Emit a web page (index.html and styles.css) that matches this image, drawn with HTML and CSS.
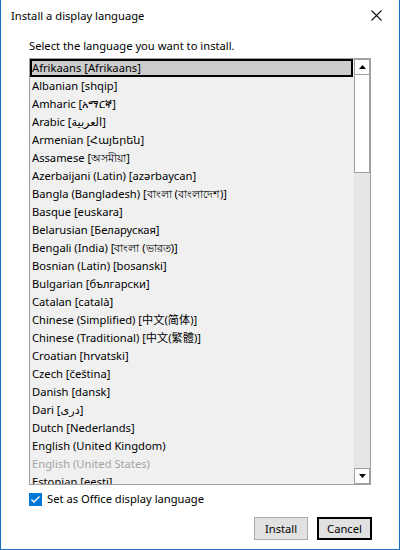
FILE: index.html
```html
<!DOCTYPE html>
<html lang="en">
<head>
<meta charset="utf-8">
<title>Install a display language</title>
<link rel="stylesheet" href="styles.css">
</head>
<body>
<div class="window">
  <div class="titlebar">
    <span class="title">Install a display language</span>
    <span class="close" aria-label="Close">
      <svg width="11" height="11" viewBox="0 0 11 11"><path d="M0.5 0.5 L10.5 10.5 M10.5 0.5 L0.5 10.5" stroke="#111" stroke-width="1.1" fill="none"/></svg>
    </span>
  </div>
  <div class="content">
    <div class="prompt">Select the language you want to install.</div>
    <div class="listbox">
      <ul class="items">
        <li class="item selected">Afrikaans [Afrikaans]</li>
        <li class="item">Albanian [shqip]</li>
        <li class="item">Amharic [አማርኛ]</li>
        <li class="item">Arabic [العربية]</li>
        <li class="item">Armenian [Հայերեն]</li>
        <li class="item">Assamese [অসমীয়া]</li>
        <li class="item">Azerbaijani (Latin) [azərbaycan]</li>
        <li class="item">Bangla (Bangladesh) [বাংলা (বাংলাদেশ)]</li>
        <li class="item">Basque [euskara]</li>
        <li class="item">Belarusian [Беларуская]</li>
        <li class="item">Bengali (India) [বাংলা (ভারত)]</li>
        <li class="item">Bosnian (Latin) [bosanski]</li>
        <li class="item">Bulgarian [български]</li>
        <li class="item">Catalan [català]</li>
        <li class="item">Chinese (Simplified) [中文(简体)]</li>
        <li class="item">Chinese (Traditional) [中文(繁體)]</li>
        <li class="item">Croatian [hrvatski]</li>
        <li class="item">Czech [čeština]</li>
        <li class="item">Danish [dansk]</li>
        <li class="item">Dari [دری]</li>
        <li class="item">Dutch [Nederlands]</li>
        <li class="item">English (United Kingdom)</li>
        <li class="item disabled">English (United States)</li>
        <li class="item">Estonian [eesti]</li>
      </ul>
      <div class="scrollbar">
        <div class="sb-btn">
          <svg width="7" height="4" viewBox="0 0 7 4"><path d="M0 4 L3.5 0 L7 4 Z" fill="#000"/></svg>
        </div>
        <div class="sb-thumb"></div>
        <div class="sb-track"></div>
        <div class="sb-btn">
          <svg width="7" height="4" viewBox="0 0 7 4"><path d="M0 0 L7 0 L3.5 4 Z" fill="#000"/></svg>
        </div>
      </div>
    </div>
    <label class="check-row">
      <span class="checkbox">
        <svg width="13" height="13" viewBox="0 0 13 13"><path d="M2.5 6.5 L5 9 L10.5 3.5" stroke="#fff" stroke-width="1.4" fill="none"/></svg>
      </span>
      <span class="check-label">Set as Office display language</span>
    </label>
    <div class="buttons">
      <button class="btn install">Install</button>
      <button class="btn cancel">Cancel</button>
    </div>
  </div>
</div>
</body>
</html>
```

FILE: styles.css
```css
html, body {
  margin: 0;
  padding: 0;
  background: #ffffff;
}

.window {
  width: 400px;
  height: 550px;
  box-sizing: border-box;
  border-left: 1px solid #1c6ebf;
  border-right: 1px solid #1c6ebf;
  border-bottom: 1px solid #1c6ebf;
  background: #ffffff;
  font-family: "Segoe UI", "Noto Sans", "DejaVu Sans", "Noto Sans CJK SC", sans-serif;
  font-size: 11.2px;
  color: #000;
  display: flex;
  flex-direction: column;
}

.titlebar {
  height: 31px;
  display: flex;
  align-items: center;
  justify-content: space-between;
  padding-left: 10px;
  padding-right: 17px;
}

.title {
  line-height: 16px;
}

.close {
  display: flex;
  width: 11px;
  height: 11px;
}

.content {
  padding: 0 28px;
  display: flex;
  flex-direction: column;
}

.prompt {
  margin-top: 7px;
  line-height: 16px;
  height: 16px;
}

.listbox {
  margin-top: 4px;
  height: 427px;
  box-sizing: border-box;
  border: 1px solid #a0a0a0;
  background: #f0f0f0;
  display: flex;
  overflow: hidden;
}

.items {
  list-style: none;
  margin: 0;
  padding: 0;
  width: 323px;
  flex: none;
}

.item {
  height: 18px;
  line-height: 18px;
  padding-left: 2px;
  white-space: nowrap;
  overflow: hidden;
  box-sizing: border-box;
}

.item.selected {
  background: #cccccc;
  border: 2px solid #000;
  padding-left: 0;
  line-height: 14px;
}

.item.disabled {
  color: #a3a3a3;
}

.scrollbar {
  margin-left: 1px;
  width: 16px;
  flex: none;
  background: #e6e6e6;
  display: flex;
  flex-direction: column;
}

.sb-btn {
  height: 16px;
  box-sizing: border-box;
  border: 1px solid #a0a0a0;
  background: #ffffff;
  display: flex;
  align-items: center;
  justify-content: center;
  flex: none;
}

.sb-thumb {
  height: 98px;
  box-sizing: border-box;
  border: 1px solid #a0a0a0;
  border-top: none;
  background: #ffffff;
  flex: none;
}

.sb-track {
  flex: 1;
}

.check-row {
  margin-top: 7px;
  display: flex;
  align-items: center;
  height: 14px;
}

.checkbox {
  width: 13px;
  height: 13px;
  background: #0078d7;
  display: flex;
  flex: none;
}

.check-label {
  margin-left: 5px;
  line-height: 14px;
}

.buttons {
  margin-top: 11px;
  display: flex;
  justify-content: flex-end;
  gap: 9px;
}

.btn {
  font: inherit;
  color: #000;
  height: 23px;
  box-sizing: border-box;
  background: #e1e1e1;
  border: 1px solid #adadad;
  padding: 0;
  margin: 0;
}

.btn.install {
  width: 54px;
}

.btn.cancel {
  width: 55px;
  border: 2px solid #000;
  margin-right: -1px;
}
```
